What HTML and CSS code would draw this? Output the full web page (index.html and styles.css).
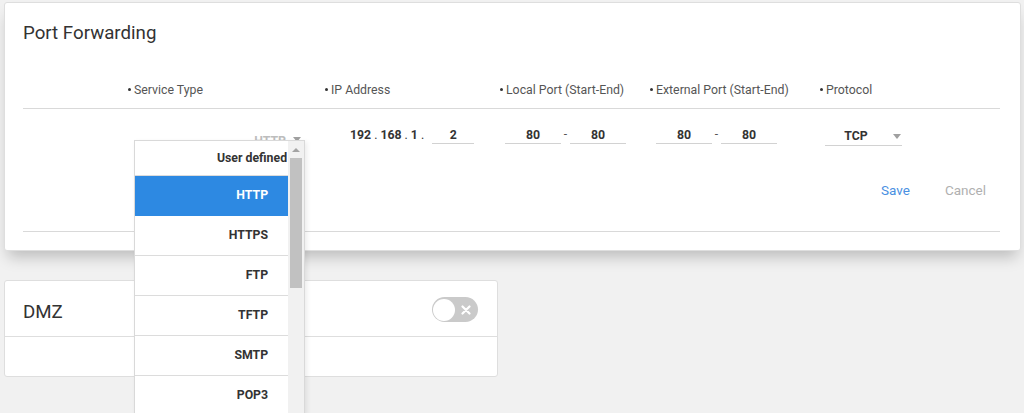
FILE: index.html
```html
<!DOCTYPE html>
<html lang="en">
<head>
  <meta charset="UTF-8">
  <meta name="viewport" content="width=device-width, initial-scale=1.0">
  <title>Port Forwarding</title>
  <link rel="stylesheet" href="styles.css">
</head>
<body>

<div class="card pf-card">
  <h2 class="card-title">Port Forwarding</h2>

  <div class="pf-grid pf-head">
    <div></div>
    <div class="label"><span class="dot"></span>Service Type</div>
    <div class="label"><span class="dot"></span>IP Address</div>
    <div class="label"><span class="dot"></span>Local Port (Start-End)</div>
    <div class="label"><span class="dot"></span>External Port (Start-End)</div>
    <div class="label"><span class="dot"></span>Protocol</div>
  </div>

  <div class="pf-grid pf-row">
    <div></div>
    <div class="cell-service">
      <div class="select service-select">
        <span class="select-text">HTTP</span><span class="arrow"></span>
        <!-- open list -->
        <div class="dropdown">
          <ul class="dropdown-list">
            <li class="group">User defined</li>
            <li class="active">HTTP</li>
            <li>HTTPS</li>
            <li>FTP</li>
            <li>TFTP</li>
            <li>SMTP</li>
            <li>POP3</li>
          </ul>
          <div class="scrollbar">
            <div class="sb-up"><span></span></div>
            <div class="sb-thumb"></div>
          </div>
        </div>
      </div>
    </div>
    <div class="cell-ip">
      <span class="ip-part">192</span><span class="ip-dot">.</span>
      <span class="ip-part">168</span><span class="ip-dot">.</span>
      <span class="ip-part">1</span><span class="ip-dot">.</span>
      <input class="field ip-last" value="2">
    </div>
    <div class="cell-port">
      <input class="field port" value="80"><span class="dash">-</span><input class="field port" value="80">
    </div>
    <div class="cell-port cell-ext">
      <input class="field port" value="80"><span class="dash">-</span><input class="field port" value="80">
    </div>
    <div class="cell-proto">
      <div class="select proto-select">
        <span class="select-text">TCP</span><span class="arrow"></span>
      </div>
    </div>
  </div>

  <div class="pf-actions">
    <button class="btn btn-save">Save</button>
    <button class="btn btn-cancel">Cancel</button>
  </div>
</div>

<div class="card dmz-card">
  <div class="dmz-head">
    <h2 class="card-title">DMZ</h2>
    <span class="toggle">
      <span class="knob"></span>
      <svg class="toggle-x" width="10" height="10" viewBox="0 0 10 10">
        <path d="M1.5 1.5 L8.5 8.5 M8.5 1.5 L1.5 8.5" stroke="#fff" stroke-width="2.2" stroke-linecap="round"/>
      </svg>
    </span>
  </div>
  <div class="dmz-body"></div>
</div>

</body>
</html>
```

FILE: styles.css
```css
* {
  box-sizing: border-box;
}
html, body {
  margin: 0;
  height: 100%;
}
body {
  font-family: Roboto, "Noto Sans", Arial, sans-serif;
  background: #f1f1f1;
  color: #333;
  padding: 2px 0 0 4px;
  overflow: hidden;
}
.card {
  background: #fff;
  border: 1px solid #dedede;
  border-radius: 3px;
}
.card-title {
  margin: 0;
  font-size: 18.7px;
  font-weight: 400;
  line-height: 24px;
  color: #333;
}

/* port forwarding */
.pf-card {
  position: relative;
  z-index: 2;
  width: 1017px;
  padding: 18px 20px 18px 18px;
  box-shadow: 0 10px 14px -4px rgba(0, 0, 0, 0.22);
}
.pf-grid {
  display: grid;
  grid-template-columns: 105px 197px 175px 150px 170px 1fr;
}
.pf-head {
  margin-top: 26px;
  height: 38px;
  align-items: center;
  border-bottom: 1px solid #d9d9d9;
}
.label {
  display: flex;
  align-items: center;
  font-size: 12.3px;
  color: #555;
}
.dot {
  width: 3px;
  height: 3px;
  border-radius: 50%;
  background: #333;
  margin-right: 3px;
}
.pf-row {
  height: 46px;
  padding-top: 17px;
  align-items: start;
}
.field {
  height: 18px;
  padding: 0;
  border: none;
  border-bottom: 1px solid #d2d2d2;
  background: transparent;
  font-family: inherit;
  font-size: 12.3px;
  font-weight: 700;
  line-height: 17px;
  color: #333;
  text-align: center;
  outline: none;
}
.cell-ip {
  display: flex;
  align-items: flex-start;
  padding-left: 25px;
  font-size: 12.3px;
  font-weight: 700;
  line-height: 18px;
}
.ip-dot {
  margin: 0 3px;
  font-weight: 400;
}
.ip-last {
  width: 42px;
  margin-left: 5px;
}
.cell-port {
  display: flex;
  padding-left: 5px;
}
.cell-ext {
  padding-left: 6px;
}
.port {
  width: 56px;
}
.dash {
  width: 9px;
  text-align: center;
  font-size: 12px;
  line-height: 16px;
  color: #555;
}
.select {
  display: flex;
  align-items: center;
  font-size: 12.3px;
  font-weight: 700;
}
.arrow {
  width: 0;
  height: 0;
  border-left: 4.5px solid transparent;
  border-right: 4.5px solid transparent;
  border-top: 5px solid #a0a0a0;
}
.cell-service {
  padding-left: 6px;
}
.service-select {
  position: relative;
  width: 171px;
  height: 24px;
  padding: 6px 4px 0 0;
  justify-content: flex-end;
  align-items: flex-start;
  line-height: 18px;
  color: #bdbdbd;
}
.service-select .arrow {
  margin: 5px 0 0 7px;
}
.cell-proto {
  padding-left: 5px;
}
.proto-select {
  width: 77px;
  height: 20px;
  padding-top: 2px;
  border-bottom: 1px solid #d2d2d2;
  line-height: 17px;
  color: #333;
}
.proto-select .select-text {
  width: 62px;
  text-align: center;
  margin-right: 6px;
}

/* open list */
.dropdown {
  position: absolute;
  top: 14px;
  left: 0;
  width: 171px;
  height: 274px;
  display: flex;
  background: #fff;
  border: 1px solid #d9d9d9;
  border-bottom: none;
  overflow: hidden;
  box-shadow: 2px 2px 5px rgba(0, 0, 0, 0.08);
}
.dropdown-list {
  width: 154px;
  margin: 0;
  padding: 0;
  list-style: none;
}
.dropdown-list li {
  height: 40px;
  line-height: 39px;
  padding-right: 20px;
  border-bottom: 1px solid #dcdcdc;
  text-align: right;
  font-size: 12.3px;
  font-weight: 700;
  color: #333;
}
.dropdown-list li.group {
  height: 35px;
  line-height: 34px;
  padding-right: 1px;
}
.dropdown-list li.active {
  background: #2d89e2;
  border-bottom-color: #2d89e2;
  color: #fff;
}
.scrollbar {
  width: 16px;
  background: #f1f1f1;
  display: flex;
  flex-direction: column;
  align-items: center;
}
.sb-up {
  height: 17px;
  display: flex;
  align-items: center;
}
.sb-up span {
  width: 0;
  height: 0;
  border-left: 4px solid transparent;
  border-right: 4px solid transparent;
  border-bottom: 4px solid #a3a3a3;
}
.sb-thumb {
  width: 12px;
  height: 130px;
  background: #c1c1c1;
}

.pf-actions {
  display: flex;
  justify-content: flex-end;
  padding: 20px 0 26px;
  border-bottom: 1px solid #d9d9d9;
}
.btn {
  border: none;
  background: none;
  font-family: inherit;
  font-size: 13.5px;
  line-height: 30px;
  padding: 0 14px;
  margin-left: 7px;
  cursor: pointer;
}
.btn-save {
  color: #4a90e2;
}
.btn-cancel {
  color: #b0b0b0;
}

/* dmz */
.dmz-card {
  width: 494px;
  margin-top: 29px;
}
.dmz-head {
  display: flex;
  justify-content: space-between;
  align-items: center;
  height: 56px;
  padding: 0 19px 0 18px;
  border-bottom: 1px solid #dedede;
}
.dmz-head .card-title {
  margin-top: 6px;
}
.toggle {
  display: flex;
  align-items: center;
  justify-content: space-between;
  width: 46px;
  height: 25px;
  margin-top: 2px;
  padding: 0 7px 0 1px;
  border-radius: 13px;
  background: #cacaca;
}
.knob {
  width: 22px;
  height: 22px;
  border-radius: 50%;
  background: #fff;
}
.dmz-body {
  height: 39px;
}
```
